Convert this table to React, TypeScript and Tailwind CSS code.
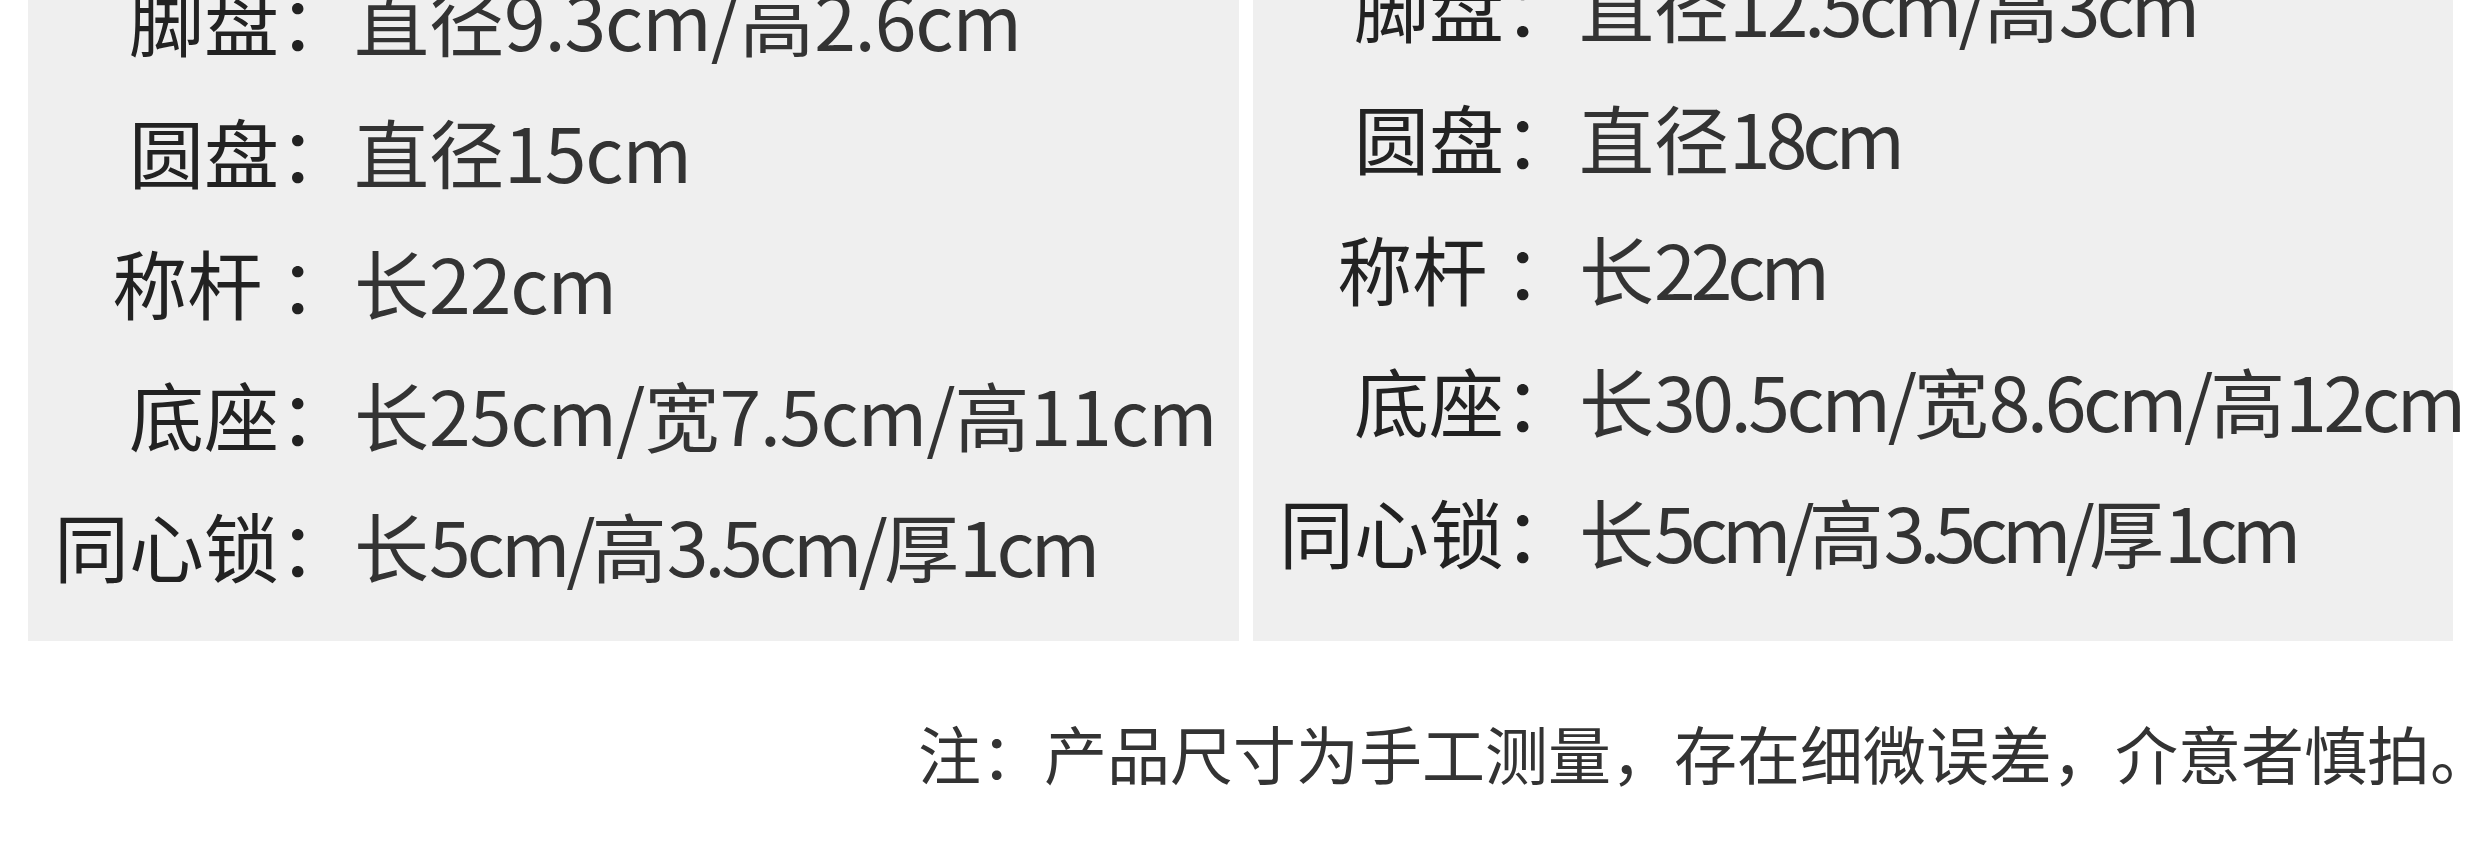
import React from 'react';

type Row = { label: string; value: string; tracking: string };

const leftRows: Row[] = [
  { label: '脚盘', value: '直径9.3cm/高2.6cm', tracking: 'tracking-[-1px]' },
  { label: '圆盘', value: '直径15cm', tracking: 'tracking-[-1px]' },
  { label: '称杆 ', value: '长22cm', tracking: 'tracking-[-1px]' },
  { label: '底座', value: '长25cm/宽7.5cm/高11cm', tracking: 'tracking-[-1px]' },
  { label: '同心锁', value: '长5cm/高3.5cm/厚1cm', tracking: 'tracking-[-4px]' },
];

const rightRows: Row[] = [
  { label: '脚盘', value: '直径12.5cm/高3cm', tracking: 'tracking-[-4px]' },
  { label: '圆盘', value: '直径18cm', tracking: 'tracking-[-5px]' },
  { label: '称杆 ', value: '长22cm', tracking: 'tracking-[-5px]' },
  { label: '底座', value: '长30.5cm/宽8.6cm/高12cm', tracking: 'tracking-[-3.3px]' },
  { label: '同心锁', value: '长5cm/高3.5cm/厚1cm', tracking: 'tracking-[-6px]' },
];

// latin runs in the values are set tighter than the CJK ones
function Value({ text, tracking }: { text: string; tracking: string }) {
  const parts = text.split(/([\u4e00-\u9fff]+)/).filter(Boolean);
  return (
    <span className="text-[#333333]">
      {parts.map((p, i) =>
        /[\u4e00-\u9fff]/.test(p) ? (
          <span key={i}>{p}</span>
        ) : (
          <span key={i} className={tracking}>{p}</span>
        )
      )}
    </span>
  );
}

function SpecPanel({ rows, offset, width }: { rows: Row[]; offset: string; width: string }) {
  return (
    <div className={`${width} h-full bg-[#efefef]`}>
      <div className={`flex flex-col ${offset}`}>
        {rows.map((row, i) => (
          <div key={i} className="flex items-center h-[131.5px] text-[75px] leading-none whitespace-nowrap">
            <span className="w-[326px] shrink-0 text-right text-[#222222] whitespace-pre">
              {row.label}：
            </span>
            <Value text={row.value} tracking={row.tracking} />
          </div>
        ))}
      </div>
    </div>
  );
}

export default function App() {
  return (
    <div className="w-[2480px] h-[868px] bg-white overflow-hidden font-['Noto_Sans_CJK_SC',sans-serif]">
      {/* spec panels */}
      <div className="flex h-[641px] pl-[28px] gap-[14px]">
        <SpecPanel rows={leftRows} offset="-mt-[47px]" width="w-[1211px]" />
        <SpecPanel rows={rightRows} offset="-mt-[61px]" width="w-[1200px]" />
      </div>

      {/* footnote */}
      <div className="flex h-[227px] items-center pl-[918px] pb-[6px]">
        <p className="text-[63px] leading-none text-[#333333] whitespace-nowrap">
          注：产品尺寸为手工测量，存在细微误差，介意者慎拍。
        </p>
      </div>
    </div>
  );
}
